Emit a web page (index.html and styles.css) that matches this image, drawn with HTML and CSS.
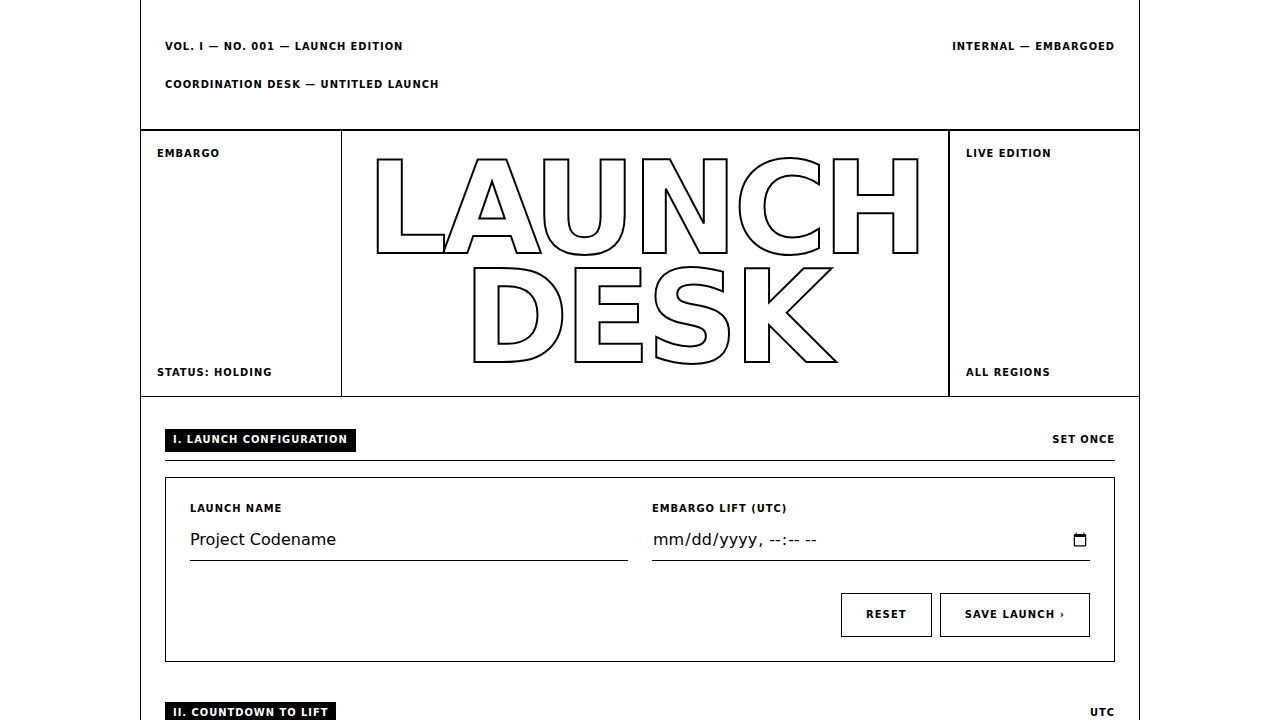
FILE: index.html
```
<!DOCTYPE html>
<html lang="en">

<head>
    <meta charset="UTF-8">
    <meta name="viewport" content="width=device-width, initial-scale=1.0">
    <title>Launch Desk</title>
    <link rel="stylesheet" href="styles.css">
</head>

<body>
    <div class="page">
        <header class="topline label">
            <span>Vol. I — No. 001 — Launch Edition</span>
            <span>Internal — Embargoed</span>
            <span>Coordination Desk — Untitled Launch</span>
        </header>

        <div class="masthead">
            <div class="ear ear-left label">
                <span>Embargo</span>
                <span>Status: Holding</span>
            </div>
            <h1 class="title">Launch Desk</h1>
            <div class="ear ear-right label">
                <span>Live Edition</span>
                <span>All Regions</span>
            </div>
        </div>

        <main class="content">
            <section class="section">
                <div class="section-head label">
                    <h2 class="tag">I. Launch Configuration</h2>
                    <span>Set Once</span>
                </div>

                <form class="panel">
                    <div class="fields">
                        <div class="field">
                            <label class="label" for="launch-name">Launch Name</label>
                            <input type="text" id="launch-name" placeholder="Project Codename">
                        </div>
                        <div class="field">
                            <label class="label" for="embargo-lift">Embargo Lift (UTC)</label>
                            <input type="datetime-local" id="embargo-lift">
                        </div>
                    </div>
                    <div class="actions">
                        <button type="reset" class="btn">Reset</button>
                        <button type="submit" class="btn">Save Launch ›</button>
                    </div>
                </form>
            </section>

            <section class="section">
                <div class="section-head label">
                    <h2 class="tag">II. Countdown to Lift</h2>
                    <span>UTC</span>
                </div>
            </section>
        </main>
    </div>
</body>

</html>
```
FILE: styles.css
```
* {
    box-sizing: border-box;
}

body {
    margin: 0;
    background: #fff;
    color: #000;
    font-family: "DejaVu Sans", sans-serif;
    font-size: 16px;
}

.page {
    max-width: 1000px;
    min-height: 100vh;
    margin: 0 auto;
    border-left: 1px solid #000;
    border-right: 1px solid #000;
}

.label {
    font-family: "DejaVu Sans Condensed", "DejaVu Sans", sans-serif;
    font-size: 11px;
    font-weight: bold;
    line-height: 14px;
    letter-spacing: 0.09em;
    text-transform: uppercase;
}

/* Top line */

.topline {
    display: grid;
    grid-template-columns: 1fr auto;
    row-gap: 24px;
    padding: 40px 24px 37px;
    border-bottom: 2px solid #000;
}

/* Masthead: two ears around the title */

.masthead {
    display: grid;
    grid-template-columns: 201px 1fr 191px;
    border-bottom: 1px solid #000;
}

.ear {
    display: flex;
    flex-direction: column;
    justify-content: space-between;
    padding: 16px;
}

.ear-left {
    border-right: 1px solid #000;
}

.ear-right {
    border-left: 2px solid #000;
}

.title {
    margin: 0;
    padding: 23px 16px 24px;
    font-size: 128px;
    font-weight: bold;
    line-height: 109px;
    letter-spacing: -0.04em;
    text-align: center;
    text-transform: uppercase;
    color: transparent;
    -webkit-text-stroke: 2px #000;
}

/* Sections */

.content {
    padding: 32px 24px;
}

.section {
    margin-bottom: 40px;
}

.section-head {
    display: flex;
    justify-content: space-between;
    align-items: baseline;
    margin-bottom: 16px;
    padding-bottom: 8px;
    border-bottom: 1px solid #000;
}

.tag {
    margin: 0;
    padding: 4px 8px 5px;
    background: #000;
    color: #fff;
    font-size: 11px;
}

.panel {
    padding: 24px;
    border: 1px solid #000;
}

.fields {
    display: grid;
    grid-template-columns: 1fr 1fr;
    gap: 24px;
}

.field {
    display: flex;
    flex-direction: column;
    gap: 3px;
}

.field input {
    width: 100%;
    height: 42px;
    padding: 0;
    border: none;
    border-bottom: 1px solid #000;
    border-radius: 0;
    background: transparent;
    color: #000;
    font-family: inherit;
    font-size: 16px;
}

.field input::placeholder {
    color: #000;
}

.actions {
    display: flex;
    justify-content: flex-end;
    gap: 8px;
    margin-top: 32px;
}

.btn {
    height: 44px;
    padding: 0 24px 2px;
    border: 1px solid #000;
    border-radius: 0;
    background: #fff;
    color: #000;
    font-family: inherit;
    font-size: 10px;
    font-weight: bold;
    letter-spacing: 0.11em;
    text-transform: uppercase;
    cursor: pointer;
}

.btn:hover {
    background: #000;
    color: #fff;
}
```
